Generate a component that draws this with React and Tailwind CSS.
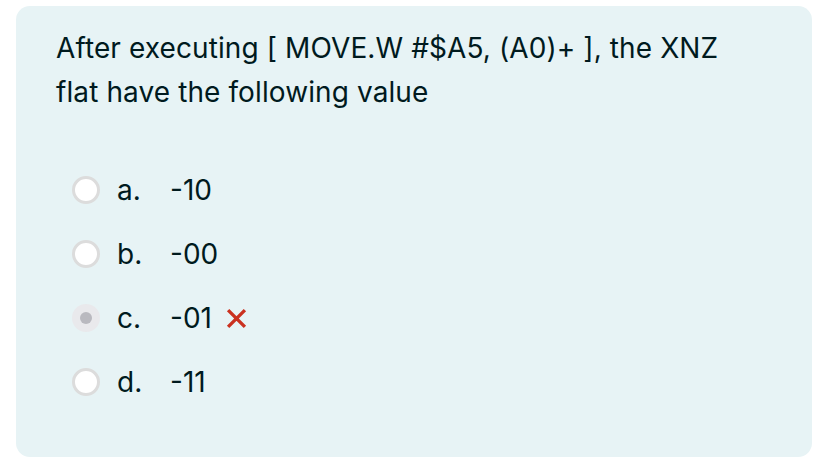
import React from 'react';

const options = [
  { letter: 'a.', value: '-10' },
  { letter: 'b.', value: '-00' },
  { letter: 'c.', value: '-01', checked: true, wrong: true },
  { letter: 'd.', value: '-11' },
];

function Radio({ checked }) {
  if (checked) {
    return (
      <span className="flex h-[28px] w-[28px] shrink-0 items-center justify-center rounded-full bg-[#e9e9ec]">
        <span className="h-[12px] w-[12px] rounded-full bg-[#b9b9bf]" />
      </span>
    );
  }
  return <span className="h-[28px] w-[28px] shrink-0 rounded-full border-[3px] border-[#dcdcdc] bg-white" />;
}

export default function App() {
  return (
    <div className="min-h-screen bg-white px-[16px] pt-[6px]" style={{ fontFamily: 'Inter, "Noto Sans", sans-serif' }}>
      <div className="h-[451px] rounded-[14px] bg-[#e7f3f5] px-[40px] pt-[20px] text-[#001a1e]">
        {/* Question text */}
        <p className="text-[28px] leading-[44px] tracking-[0.1px]">
          After executing [ MOVE.W #$A5, (A0)+ ], the XNZ
          <br />
          flat have the following value
        </p>

        {/* Answers */}
        <div className="mt-[62px] flex flex-col gap-[36px] pl-[16px]">
          {options.map((o) => (
            <div key={o.letter} className="flex h-[28px] items-center">
              <Radio checked={o.checked} />
              <span className="ml-[17px] w-[53px] text-[28px]">{o.letter}</span>
              <span className="text-[28px]">{o.value}</span>
              {o.wrong && (
                <svg className="ml-[14px]" width="21" height="21" viewBox="0 0 20 20">
                  <path d="M2 2 L18 18 M18 2 L2 18" stroke="#ca3120" strokeWidth="3.2" />
                </svg>
              )}
            </div>
          ))}
        </div>
      </div>
    </div>
  );
}
